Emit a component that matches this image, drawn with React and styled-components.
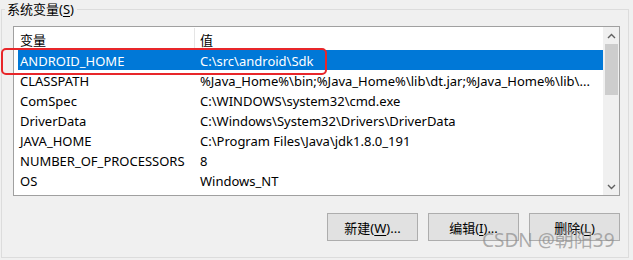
import React from "react";
import styled, { createGlobalStyle } from "styled-components";

const Global = createGlobalStyle`
  html, body { margin: 0; padding: 0; background: #f0f0f0; }
  body { font-family: "Noto Sans", "Noto Sans CJK SC", sans-serif; }
`;

const Page = styled.div`
  position: relative;
  width: 633px;
  height: 260px;
  overflow: hidden;
  background: #f0f0f0;
  color: #000;
  font-size: 13px;
`;

const Group = styled.fieldset`
  box-sizing: border-box;
  margin: 0 0 0 1px;
  width: 627px;
  height: 258px;
  border: 1px solid #dcdcdc;
  padding: 8px 8px 0 11px;
  display: flex;
  flex-direction: column;
`;

const Legend = styled.legend`
  padding: 0 3px 0 2px;
  margin-left: -8px;
  font-size: 13px;
  line-height: 18px;
  color: #000;
`;

const Key = styled.span`
  text-decoration: underline;
  text-underline-offset: 2px;
`;

const ListView = styled.div`
  box-sizing: border-box;
  width: 607px;
  height: 170px;
  border: 1px solid #a0a0a0;
  background: #fff;
  display: flex;
  overflow: hidden;
`;

const Table = styled.div`
  flex: 1;
  min-width: 0;
  padding: 1px 0 0 4px;
  overflow: hidden;
`;

const Row = styled.div`
  display: grid;
  grid-template-columns: 177px 1fr;
  height: ${(p) => (p.$header ? 22 : 20)}px;
  align-items: center;
  background: ${(p) => (p.$selected ? "#0078d7" : "transparent")};
  color: ${(p) => (p.$selected ? "#fff" : "#000")};
  white-space: nowrap;
`;

const Cell = styled.div`
  box-sizing: border-box;
  height: 100%;
  display: flex;
  align-items: center;
  padding: 1px 0 0 ${(p) => (p.$second ? 5 : 2)}px;
  overflow: hidden;
  border-right: ${(p) => (p.$divider ? "1px solid #e5e5e5" : "none")};
`;

const Scrollbar = styled.div`
  width: 16px;
  flex: none;
  background: #f0f0f0;
  display: flex;
  flex-direction: column;
  align-items: center;
`;

const Arrow = styled.div`
  height: 17px;
  width: 100%;
  display: flex;
  align-items: center;
  justify-content: center;
  flex: none;
`;

const Track = styled.div`
  flex: 1;
  width: 100%;
  display: flex;
  justify-content: center;
`;

const Thumb = styled.div`
  width: 13px;
  height: 51px;
  background: #cdcdcd;
`;

const Buttons = styled.div`
  display: flex;
  justify-content: flex-end;
  gap: 10px;
  margin-top: 17px;
`;

const Button = styled.button`
  box-sizing: border-box;
  width: 91px;
  height: 28px;
  background: #e1e1e1;
  border: 1px solid #adadad;
  font-family: inherit;
  font-size: 13px;
  color: #000;
  padding: 0;
`;

const Highlight = styled.div`
  position: absolute;
  left: 1px;
  top: 48px;
  width: 326px;
  height: 27px;
  box-sizing: border-box;
  border: 2.5px solid #e8262a;
  border-radius: 5px;
  pointer-events: none;
`;

const Watermark = styled.div`
  position: absolute;
  left: 482px;
  top: 227px;
  font-family: "Noto Sans", "Noto Sans CJK SC", sans-serif;
  font-size: 19px;
  line-height: 26px;
  color: rgba(140, 140, 140, 0.7);
  white-space: nowrap;
  pointer-events: none;
`;

const rows = [
  ["ANDROID_HOME", "C:\\src\\android\\Sdk"],
  ["CLASSPATH", "%Java_Home%\\bin;%Java_Home%\\lib\\dt.jar;%Java_Home%\\lib\\..."],
  ["ComSpec", "C:\\WINDOWS\\system32\\cmd.exe"],
  ["DriverData", "C:\\Windows\\System32\\Drivers\\DriverData"],
  ["JAVA_HOME", "C:\\Program Files\\Java\\jdk1.8.0_191"],
  ["NUMBER_OF_PROCESSORS", "8"],
  ["OS", "Windows_NT"],
  ["Path", "C:\\Program Files (x86)\\Common Files\\Oracle\\Java\\javapath;C:\\P..."],
];

const Chevron = ({ up }) => (
  <svg width="9" height="6" viewBox="0 0 9 6">
    <path
      d={up ? "M1 5 L4.5 1.5 L8 5" : "M1 1 L4.5 4.5 L8 1"}
      fill="none"
      stroke="#606060"
      strokeWidth="1.4"
    />
  </svg>
);

export default function App() {
  return (
    <Page>
      <Global />
      <Group>
        <Legend>
          系统变量(<Key>S</Key>)
        </Legend>
        <ListView>
          <Table>
            <Row $header>
              <Cell $divider>变量</Cell>
              <Cell $second>值</Cell>
            </Row>
            {rows.map(([k, v], i) => (
              <Row key={k} $selected={i === 0}>
                <Cell>{k}</Cell>
                <Cell $second>{v}</Cell>
              </Row>
            ))}
          </Table>
          <Scrollbar>
            <Arrow>
              <Chevron up />
            </Arrow>
            <Track>
              <Thumb />
            </Track>
            <Arrow>
              <Chevron />
            </Arrow>
          </Scrollbar>
        </ListView>
        <Buttons>
          <Button>
            新建(<Key>W</Key>)...
          </Button>
          <Button>
            编辑(<Key>I</Key>)...
          </Button>
          <Button>
            删除(<Key>L</Key>)
          </Button>
        </Buttons>
      </Group>
      <Highlight />
      <Watermark>CSDN @朝阳39</Watermark>
    </Page>
  );
}
